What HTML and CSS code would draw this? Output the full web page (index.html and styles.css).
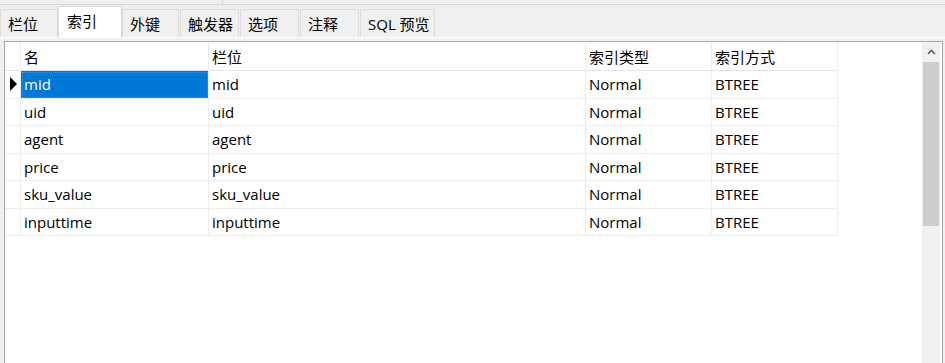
FILE: index.html
```html
<!DOCTYPE html>
<html lang="zh-CN">
<head>
    <meta charset="UTF-8">
    <title>索引</title>
    <link rel="stylesheet" href="styles.css">
</head>
<body>
    <div class="topbar"><span class="tick"></span></div>

    <div class="tabs">
        <div class="tab">栏位</div>
        <div class="tab active">索引</div>
        <div class="tab">外键</div>
        <div class="tab">触发器</div>
        <div class="tab">选项</div>
        <div class="tab">注释</div>
        <div class="tab">SQL 预览</div>
    </div>

    <div class="panel">
        <div class="grid">
            <div class="row head">
                <div class="cell sel"></div>
                <div class="cell">名</div>
                <div class="cell">栏位</div>
                <div class="cell">索引类型</div>
                <div class="cell">索引方式</div>
            </div>
            <div class="row">
                <div class="cell sel"><span class="pointer"></span></div>
                <div class="cell focused">mid</div>
                <div class="cell">mid</div>
                <div class="cell">Normal</div>
                <div class="cell">BTREE</div>
            </div>
            <div class="row">
                <div class="cell sel"></div>
                <div class="cell">uid</div>
                <div class="cell">uid</div>
                <div class="cell">Normal</div>
                <div class="cell">BTREE</div>
            </div>
            <div class="row">
                <div class="cell sel"></div>
                <div class="cell">agent</div>
                <div class="cell">agent</div>
                <div class="cell">Normal</div>
                <div class="cell">BTREE</div>
            </div>
            <div class="row">
                <div class="cell sel"></div>
                <div class="cell">price</div>
                <div class="cell">price</div>
                <div class="cell">Normal</div>
                <div class="cell">BTREE</div>
            </div>
            <div class="row">
                <div class="cell sel"></div>
                <div class="cell">sku_value</div>
                <div class="cell">sku_value</div>
                <div class="cell">Normal</div>
                <div class="cell">BTREE</div>
            </div>
            <div class="row">
                <div class="cell sel"></div>
                <div class="cell">inputtime</div>
                <div class="cell">inputtime</div>
                <div class="cell">Normal</div>
                <div class="cell">BTREE</div>
            </div>
        </div>

        <div class="scrollbar">
            <div class="arrow">
                <svg width="9" height="6" viewBox="0 0 9 6"><path d="M1 5 L4.5 1.5 L8 5" fill="none" stroke="#606060" stroke-width="1.6"/></svg>
            </div>
            <div class="thumb"></div>
        </div>
    </div>
</body>
</html>
```

FILE: styles.css
```css
* {
    margin: 0;
    padding: 0;
    box-sizing: border-box;
}

body {
    background: #f0f0f0;
    font-family: 'Open Sans', 'Noto Sans CJK SC', sans-serif;
    font-size: 15px;
    color: #000;
    height: 363px;
    overflow: hidden;
}

.topbar {
    height: 5px;
    border-bottom: 1px solid #d4d4d4;
    position: relative;
}

.tick {
    position: absolute;
    left: 222px;
    top: 0;
    width: 1px;
    height: 4px;
    background: #d4d4d4;
}

.tabs {
    display: flex;
    align-items: flex-end;
    height: 33px;
    border-bottom: 1px solid #ffffff;
}

.tab {
    height: 28px;
    padding: 0 7px;
    margin-right: 1px;
    display: flex;
    align-items: center;
    background: #f0f0f0;
    border: 1px solid #dcdcdc;
    border-bottom: none;
    white-space: nowrap;
}

.tab:nth-child(1) { width: 58px; }
.tab:nth-child(3) { width: 57px; }
.tab:nth-child(4) { width: 59px; }
.tab:nth-child(5) { width: 59px; }
.tab:nth-child(6) { width: 59px; }
.tab:nth-child(7) { width: 75px; }

.tab.active {
    width: 64px;
    height: 32px;
    margin: 0 0 -1px -1px;
    padding-left: 8px;
    padding-bottom: 4px;
    background: #ffffff;
    border-color: #d9d9d9;
}

.panel {
    margin: 3px 2px 0 4px;
    height: 330px;
    background: #ffffff;
    border: 1px solid #a8a8a8;
    border-bottom: none;
    display: flex;
    padding-right: 2px;
}

.grid {
    flex: 1;
}

.row {
    display: grid;
    grid-template-columns: 16px 188px 377px 126px 126px;
    height: 27.5px;
}

.row.head {
    height: 29px;
}

.cell {
    display: flex;
    align-items: center;
    padding-left: 3px;
    border-right: 1px solid #ededed;
    border-bottom: 1px solid #ededed;
    white-space: nowrap;
}

.head .cell {
    border-bottom-color: #e4e4e4;
}

.cell.sel {
    padding: 0;
    justify-content: center;
}

.pointer {
    width: 0;
    height: 0;
    border-top: 7px solid transparent;
    border-bottom: 7px solid transparent;
    border-left: 7px solid #000;
    margin-left: 2px;
}

.cell.focused {
    background: #0078d7;
    color: #ffffff;
    outline: 1px dotted #c07830;
    outline-offset: -2px;
}

.scrollbar {
    width: 18px;
    background: #f0f0f0;
    display: flex;
    flex-direction: column;
}

.arrow {
    height: 20px;
    display: flex;
    align-items: center;
    justify-content: center;
}

.thumb {
    margin: 0 1px;
    height: 164px;
    background: #cdcdcd;
}
```
